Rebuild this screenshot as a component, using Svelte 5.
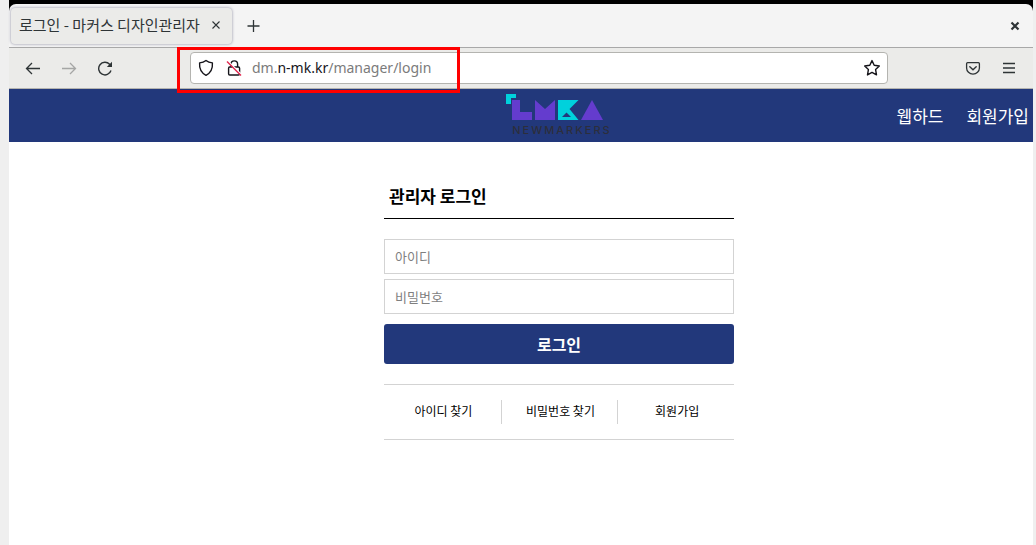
<script>
  let userId = $state('');
  let password = $state('');
  const links = ['아이디 찾기', '비밀번호 찾기', '회원가입'];
</script>

<div class="desktop">
  <div class="window">
    <div class="tabs">
      <div class="tab">
        <span class="tab-title">로그인 - 마커스 디자인관리자</span>
        <button class="icon-btn tab-close" aria-label="탭 닫기">
          <svg width="10" height="10" viewBox="0 0 10 10"><path d="M1.5 1.5l7 7M8.5 1.5l-7 7" stroke="#2e3436" stroke-width="1.1" fill="none" /></svg>
        </button>
      </div>
      <button class="icon-btn new-tab" aria-label="새 탭">
        <svg width="14" height="14" viewBox="0 0 14 14"><path d="M6.5 1v12M.5 7h12" stroke="#2e3436" stroke-width="1.3" fill="none" /></svg>
      </button>
      <button class="icon-btn win-close" aria-label="창 닫기">
        <svg width="10" height="10" viewBox="0 0 10 10"><path d="M1.5 1.5l7 7M8.5 1.5l-7 7" stroke="#2e3436" stroke-width="2.2" fill="none" /></svg>
      </button>
    </div>

    <div class="toolbar">
      <div class="nav-buttons">
        <button class="icon-btn" aria-label="뒤로">
          <svg width="16" height="16" viewBox="0 0 16 16"><path d="M15 8.5H1.8M7 3L1.5 8.5L7 14" stroke="#2e3436" stroke-width="1.3" fill="none" /></svg>
        </button>
        <button class="icon-btn" aria-label="앞으로">
          <svg width="16" height="16" viewBox="0 0 16 16"><path d="M1 8.5h13.2M9 3L14.5 8.5L9 14" stroke="#a5a6a5" stroke-width="1.3" fill="none" /></svg>
        </button>
        <button class="icon-btn" aria-label="새로 고침">
          <svg width="16" height="16" viewBox="0 0 16 16"><path d="M14 10.5A6.3 6.3 0 1 1 12.6 4.3L13.6 5.5" stroke="#2e3436" stroke-width="1.4" fill="none" /><path d="M15 1.8v5.2H9.8z" fill="#2e3436" /></svg>
        </button>
      </div>
      <div class="address">
        <div class="site-info">
          <svg width="16" height="18" viewBox="0 0 16 18"><path d="M8 1.5C9.8 3 12 3.7 14.4 3.9C14.8 9 13.3 13.6 8 16.3C2.7 13.6 1.2 9 1.6 3.9C4 3.7 6.2 3 8 1.5Z" stroke="#15141a" stroke-width="1.4" stroke-linejoin="round" fill="none" /></svg>
          <svg width="16" height="18" viewBox="0 0 16 18"><path d="M5 8V5.2a3.3 3.3 0 0 1 6.6 0V8M3.6 8H12.4Q13.6 8 13.6 9.2V14.8Q13.6 16 12.4 16H3.8Q2.6 16 2.6 14.8V9.2Q2.6 8 3.6 8Z" stroke="#15141a" stroke-width="1.4" fill="none" /><path d="M1.8 2L15.8 16" stroke="#fff" stroke-width="1.6" /><path d="M1 2.6L15 16.6" stroke="#e22850" stroke-width="1.4" /></svg>
        </div>
        <span class="url">dm.<b>n-mk.kr</b>/manager/login</span>
        <button class="icon-btn" aria-label="북마크">
          <svg width="18" height="18" viewBox="0 0 18 18"><path d="M9 1.6L11.2 6.3L16.3 7L12.6 10.6L13.5 15.9L9 13.4L4.5 15.9L5.4 10.6L1.7 7L6.8 6.3Z" stroke="#15141a" stroke-width="1.4" stroke-linejoin="round" fill="none" /></svg>
        </button>
      </div>
      <div class="tools">
        <button class="icon-btn" aria-label="포켓">
          <svg width="16" height="16" viewBox="0 0 16 16"><path d="M2.6 2.7H13.4Q14.4 2.7 14.4 3.7V7.9A6.4 6.2 0 0 1 1.6 7.9V3.7Q1.6 2.7 2.6 2.7Z" stroke="#2e3436" stroke-width="1.3" fill="none" /><path d="M4.8 6.7L8 9.7L11.2 6.7" stroke="#2e3436" stroke-width="1.4" stroke-linecap="round" fill="none" /></svg>
        </button>
        <button class="icon-btn" aria-label="메뉴">
          <svg width="16" height="16" viewBox="0 0 16 16"><path d="M2 3.5h12M2 8h12M2 12.5h12" stroke="#2e3436" stroke-width="1.3" /></svg>
        </button>
      </div>
      <div class="highlight"></div>
    </div>

    <header class="site-header">
      <a class="logo" href="#home" aria-label="NEWMARKERS">
        <svg width="98" height="26" viewBox="0 0 98 26" aria-hidden="true">
          <path d="M0 0H10V4H5V10H0Z" fill="#00d1dc" />
          <path d="M6 6H14V18H26V26H6Z" fill="#643cce" />
          <path d="M29 26V6L39 15L49 6V26Z" fill="#643cce" />
          <path d="M52 6H72.5L63.5 15L72.5 26H52Z" fill="#00d1dc" />
          <path d="M56 23L60.5 18.5L65 23Z" fill="#22387b" />
          <path d="M75 26L86 6L97 26Z" fill="#643cce" />
        </svg>
        <span class="logo-name">NEWMARKERS</span>
      </a>
      <nav class="site-nav">
        <a href="#webhard">웹하드</a>
        <a href="#join">회원가입</a>
      </nav>
    </header>

    <main class="content">
      <form class="login" onsubmit={(e) => e.preventDefault()}>
        <h1>관리자 로그인</h1>
        <input type="text" placeholder="아이디" aria-label="아이디" bind:value={userId} />
        <input type="password" placeholder="비밀번호" aria-label="비밀번호" bind:value={password} />
        <button class="submit" type="submit">로그인</button>
        <div class="links">
          {#each links as link}
            <a href="#help">{link}</a>
          {/each}
        </div>
      </form>
    </main>
  </div>
</div>

<style>
  :global(body) {
    background: #efefef;
  }
  * {
    box-sizing: border-box;
  }
  .desktop {
    display: flex;
    min-height: 100vh;
    padding: 0 3px 0 9px;
    font-family: 'Noto Sans CJK KR', sans-serif;
  }
  .window {
    flex: 1;
    display: flex;
    flex-direction: column;
    min-width: 0;
    padding-top: 4px;
    background: #000;
  }
  .icon-btn {
    display: flex;
    padding: 0;
    border: 0;
    background: none;
  }
  .tabs {
    display: flex;
    align-items: center;
    height: 44px;
    padding: 0 13px 0 2px;
    border-bottom: 1px solid #a8a8a8;
    border-radius: 7px 7px 0 0;
    background: #f4f4f4;
  }
  .tab {
    display: flex;
    align-items: center;
    justify-content: space-between;
    width: 221px;
    height: 36px;
    padding: 0 11px 2px 8px;
    border-radius: 4px;
    background: #ebebe9;
    box-shadow: 0 0 3px #8c8ca0;
    color: #2e3436;
    font-size: 15px;
    line-height: 20px;
    white-space: nowrap;
  }
  .new-tab {
    margin-left: 15px;
  }
  .win-close {
    margin-left: auto;
  }
  .toolbar {
    position: relative;
    display: flex;
    align-items: center;
    height: 41px;
    padding: 0 16px;
    border-bottom: 1px solid #b4b4b0;
    background: #ebebe9;
  }
  .nav-buttons {
    display: flex;
    gap: 20px;
  }
  .address {
    flex: 1;
    display: flex;
    align-items: center;
    gap: 10px;
    height: 32px;
    margin: 0 77px;
    padding: 0 6px 0 7px;
    border: 1px solid #b4b4b0;
    border-radius: 4px;
    background: #fff;
  }
  .site-info {
    display: flex;
    gap: 12px;
  }
  .url {
    flex: 1;
    color: #7b7b7b;
    font-family: 'Noto Sans', sans-serif;
    font-size: 14px;
    line-height: 20px;
  }
  .url b {
    color: #15141a;
    font-weight: 400;
  }
  .tools {
    display: flex;
    gap: 20px;
  }
  .highlight {
    position: absolute;
    top: -1px;
    left: 168px;
    width: 283px;
    height: 46px;
    border: 3px solid #f00;
    pointer-events: none;
  }
  .site-header {
    display: grid;
    grid-template-columns: 1fr auto 1fr;
    align-items: center;
    height: 53px;
    padding: 0 4px 2px 80px;
    background: #22387b;
  }
  .logo {
    grid-column: 2;
    display: flex;
    flex-direction: column;
    gap: 4px;
    text-decoration: none;
  }
  .logo-name {
    padding-left: 6px;
    color: #2c2e3c;
    font-family: Inter, sans-serif;
    font-size: 11px;
    font-weight: 500;
    line-height: 12px;
    letter-spacing: 2px;
  }
  .site-nav {
    display: flex;
    justify-content: flex-end;
    gap: 23px;
    padding-top: 2px;
  }
  .site-nav a {
    color: #fff;
    font-size: 17px;
    line-height: 24px;
    text-decoration: none;
  }
  .content {
    flex: 1;
    display: flex;
    justify-content: center;
    padding: 40px 0 40px 76px;
    background: #fff;
  }
  .login {
    display: flex;
    flex-direction: column;
    width: 350px;
  }
  h1 {
    margin: 0 0 20px;
    padding: 2px 5px 10px;
    border-bottom: 1px solid #000;
    color: #000;
    font-size: 17px;
    font-weight: 700;
    line-height: 24px;
  }
  input {
    height: 35px;
    margin-bottom: 5px;
    padding: 0 10px;
    border: 1px solid #d3d3d3;
    background: #fff;
    font-family: inherit;
    font-size: 13px;
  }
  input::placeholder {
    color: #7f7f7f;
  }
  .submit {
    height: 40px;
    margin: 5px 0 20px;
    border: 0;
    border-radius: 3px;
    background: #22387b;
    color: #fff;
    font-family: inherit;
    font-size: 16px;
    font-weight: 700;
  }
  .links {
    display: grid;
    grid-template-columns: repeat(3, 1fr);
    padding: 15px 0;
    border-top: 1px solid #d3d3d3;
    border-bottom: 1px solid #d3d3d3;
  }
  .links a {
    padding: 0 0 2px 2px;
    border-left: 1px solid #d3d3d3;
    color: #000;
    font-size: 12px;
    line-height: 22px;
    text-align: center;
    text-decoration: none;
  }
  .links a:first-child {
    border-left: 0;
  }
</style>
